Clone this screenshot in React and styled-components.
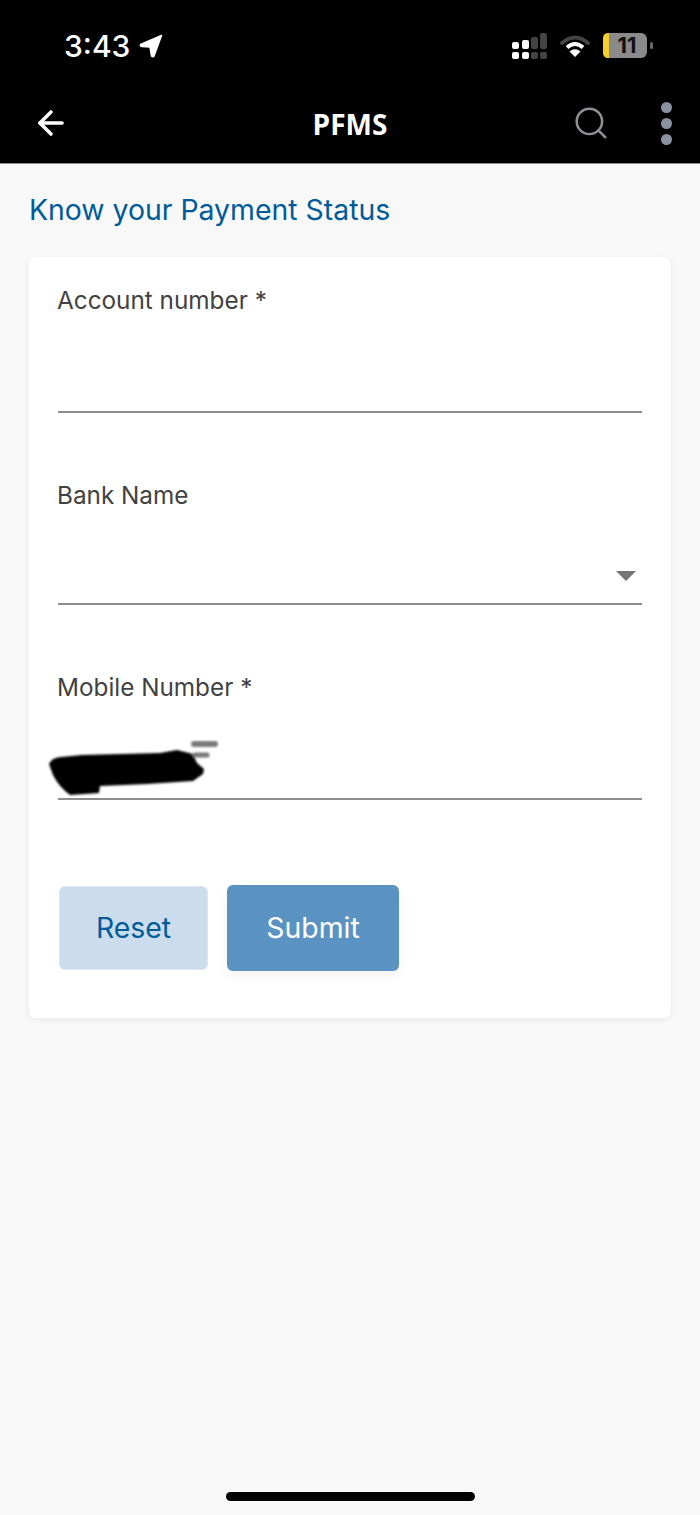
import React from "react";
import styled, { createGlobalStyle } from "styled-components";
import { ArrowLeft, Search } from "lucide-react";

const GlobalStyle = createGlobalStyle`
  html, body {
    margin: 0;
    padding: 0;
    background: #f8f8f8;
  }
  * { box-sizing: border-box; }
`;

const Screen = styled.div`
  width: 700px;
  height: 1515px;
  display: flex;
  flex-direction: column;
  background: #f8f8f8;
  font-family: "Inter", "Liberation Sans", sans-serif;
`;

const Header = styled.header`
  height: 164px;
  flex-shrink: 0;
  background: #000;
  border-bottom: 1px solid #8a8a8a;
  display: flex;
  flex-direction: column;
`;

const StatusBar = styled.div`
  height: 87px;
  padding: 26px 47px 0 64px;
  display: flex;
  justify-content: space-between;
  align-items: flex-start;
`;

const TimeGroup = styled.div`
  display: flex;
  align-items: center;
  gap: 9px;
  color: #fff;
  font-size: 30px;
  line-height: 40px;
  font-weight: 500;
`;

const StatusIcons = styled.div`
  display: flex;
  align-items: center;
  gap: 13px;
  height: 40px;
`;

const NavBar = styled.nav`
  flex: 1;
  position: relative;
  display: flex;
  align-items: center;
  justify-content: space-between;
  padding: 0 28px 4px 32px;
`;

const NavTitle = styled.div`
  position: absolute;
  left: 0;
  right: 0;
  top: 17px;
  text-align: center;
  color: #fff;
  font-family: "Open Sans", sans-serif;
  font-size: 28px;
  line-height: 40px;
  font-weight: 700;
`;

const NavActions = styled.div`
  display: flex;
  align-items: center;
  gap: 51px;
`;

const Dots = styled.div`
  display: flex;
  flex-direction: column;
  gap: 5px;
`;

const Dot = styled.span`
  width: 11px;
  height: 11px;
  border-radius: 50%;
  background: #8b92a0;
`;

const Content = styled.main`
  flex: 1;
  padding: 28px 29px 0;
  display: flex;
  flex-direction: column;
`;

const PageTitle = styled.h1`
  margin: 0 0 29px;
  color: #005b98;
  font-size: 28.4px;
  line-height: 36px;
  font-weight: 400;
`;

const Card = styled.section`
  height: 761px;
  padding: 26px 29px 0 29px;
  background: #fff;
  border-radius: 7px;
  box-shadow: 0 2px 6px rgba(0, 0, 0, 0.06);
`;

const Field = styled.div`
  position: relative;
  height: ${(p) => p.$height}px;
`;

const Label = styled.div`
  color: #424242;
  font-size: 24.3px;
  line-height: 34px;
  margin-left: -1px;
`;

const Underline = styled.div`
  position: absolute;
  left: 0;
  right: 0;
  top: ${(p) => p.$top}px;
  border-top: 2px solid #8e8e8e;
`;

const Caret = styled.span`
  position: absolute;
  right: 6px;
  top: 93px;
  width: 0;
  height: 0;
  border-left: 10px solid transparent;
  border-right: 10px solid transparent;
  border-top: 10px solid #757575;
`;

const Scribble = styled.svg`
  position: absolute;
  left: -11px;
  top: 70px;
`;

const Buttons = styled.div`
  display: flex;
  align-items: center;
  gap: 19px;
`;

const Button = styled.button`
  height: ${(p) => (p.$primary ? 86 : 84)}px;
  width: ${(p) => (p.$primary ? 172 : 149)}px;
  margin-left: ${(p) => (p.$primary ? 0 : 1)}px;
  border: ${(p) => (p.$primary ? "none" : "1px solid #dbe8f4")};
  border-radius: 6px;
  background: ${(p) => (p.$primary ? "#5a93c2" : "#cbdded")};
  color: ${(p) => (p.$primary ? "#fff" : "#005b98")};
  box-shadow: ${(p) => (p.$primary ? "0 6px 12px rgba(0, 0, 0, 0.05)" : "none")};
  font-family: inherit;
  font-size: 28.4px;
  font-weight: 400;
  padding: 0 0 2px;
`;

const HomeBar = styled.div`
  flex-shrink: 0;
  align-self: center;
  width: 249px;
  height: 9px;
  margin-bottom: 14px;
  border-radius: 5px;
  background: #000;
`;

const LocationIcon = () => (
  <svg width="24" height="24" viewBox="0 0 24 24">
    <path d="M22.5 1.5 L1.5 10.5 Q1 12.5 3 12.5 L11 13 L12.5 22 Q14 23.5 15 22 Z" fill="#fff" stroke="#fff" strokeWidth="1.5" strokeLinejoin="round" />
  </svg>
);

const SignalIcon = () => (
  <svg width="35" height="26" viewBox="0 0 35 26">
    <rect x="0" y="9" width="7" height="7" rx="2" fill="#fff" />
    <rect x="10" y="7" width="7" height="9" rx="2" fill="#fff" />
    <rect x="19" y="4" width="7" height="12" rx="2" fill="#444" />
    <rect x="28" y="0" width="7" height="16" rx="2" fill="#444" />
    <rect x="0" y="19" width="7" height="7" rx="2" fill="#fff" />
    <rect x="10" y="19" width="7" height="7" rx="2" fill="#fff" />
    <rect x="19" y="19" width="7" height="7" rx="2" fill="#444" />
    <rect x="28" y="19" width="7" height="7" rx="2" fill="#444" />
  </svg>
);

const WifiIcon = () => (
  <svg width="30" height="24" viewBox="0 0 30 24">
    <path d="M2 9 Q15 -2 28 9" fill="none" stroke="#444" strokeWidth="4" strokeLinecap="round" />
    <path d="M7 13.5 Q15 6.5 23 13.5" fill="none" stroke="#fff" strokeWidth="4" />
    <path d="M15 23 L9.5 17.5 Q15 13 20.5 17.5 Z" fill="#fff" />
  </svg>
);

const BatteryIcon = () => (
  <svg width="50" height="26" viewBox="0 0 50 26">
    <rect x="0" y="0" width="44" height="25" rx="6" fill="#8a8a8a" />
    <path d="M6 0 H5 Q0 0 0 6 V19 Q0 25 5 25 H6 Z" fill="#f4cf2e" />
    <rect x="47" y="9" width="3" height="7" rx="1.5" fill="#6b6b6b" />
    <text x="24" y="20" textAnchor="middle" fontFamily="Inter, sans-serif" fontSize="22" fontWeight="700" fill="#111">11</text>
  </svg>
);

const App = () => {
  return (
    <>
      <GlobalStyle />
      <Screen>
        <Header>
          <StatusBar>
            <TimeGroup>
              3:43
              <LocationIcon />
            </TimeGroup>
            <StatusIcons>
              <SignalIcon />
              <WifiIcon />
              <BatteryIcon />
            </StatusIcons>
          </StatusBar>
          <NavBar>
            <ArrowLeft size={38} color="#fff" strokeWidth={2.2} />
            <NavTitle>PFMS</NavTitle>
            <NavActions>
              <Search size={38} color="#8e9094" strokeWidth={1.6} />
              <Dots>
                <Dot />
                <Dot />
                <Dot />
              </Dots>
            </NavActions>
          </NavBar>
        </Header>
        <Content>
          <PageTitle>Know your Payment Status</PageTitle>
          <Card>
            <Field $height={195}>
              <Label>Account number *</Label>
              <Underline $top={128} />
            </Field>
            <Field $height={192}>
              <Label>Bank Name</Label>
              <Caret />
              <Underline $top={125} />
            </Field>
            <Field $height={215}>
              <Label>Mobile Number *</Label>
              <Scribble width="180" height="62" viewBox="0 0 180 62">
                <defs>
                  <filter id="smudge" x="-10%" y="-30%" width="120%" height="160%">
                    <feGaussianBlur stdDeviation="1" />
                  </filter>
                </defs>
                <g filter="url(#smudge)">
                  <path d="M2 24 Q4 18 14 17 L35 15 L113 13 L130 10 L146 14 L150 23 L157 29 L156 34 L146 41 L100 44 L53 46 L52 53 L23 55 Q12 47 6 35 Z" fill="#000" />
                  <path d="M147 4 H168" stroke="#7a7a7a" strokeWidth="6" strokeLinecap="round" />
                  <path d="M148 15 H160" stroke="#777" strokeWidth="5" strokeLinecap="round" />
                </g>
              </Scribble>
              <Underline $top={128} />
            </Field>
            <Buttons>
              <Button>Reset</Button>
              <Button $primary>Submit</Button>
            </Buttons>
          </Card>
        </Content>
        <HomeBar />
      </Screen>
    </>
  );
};

export default App;
